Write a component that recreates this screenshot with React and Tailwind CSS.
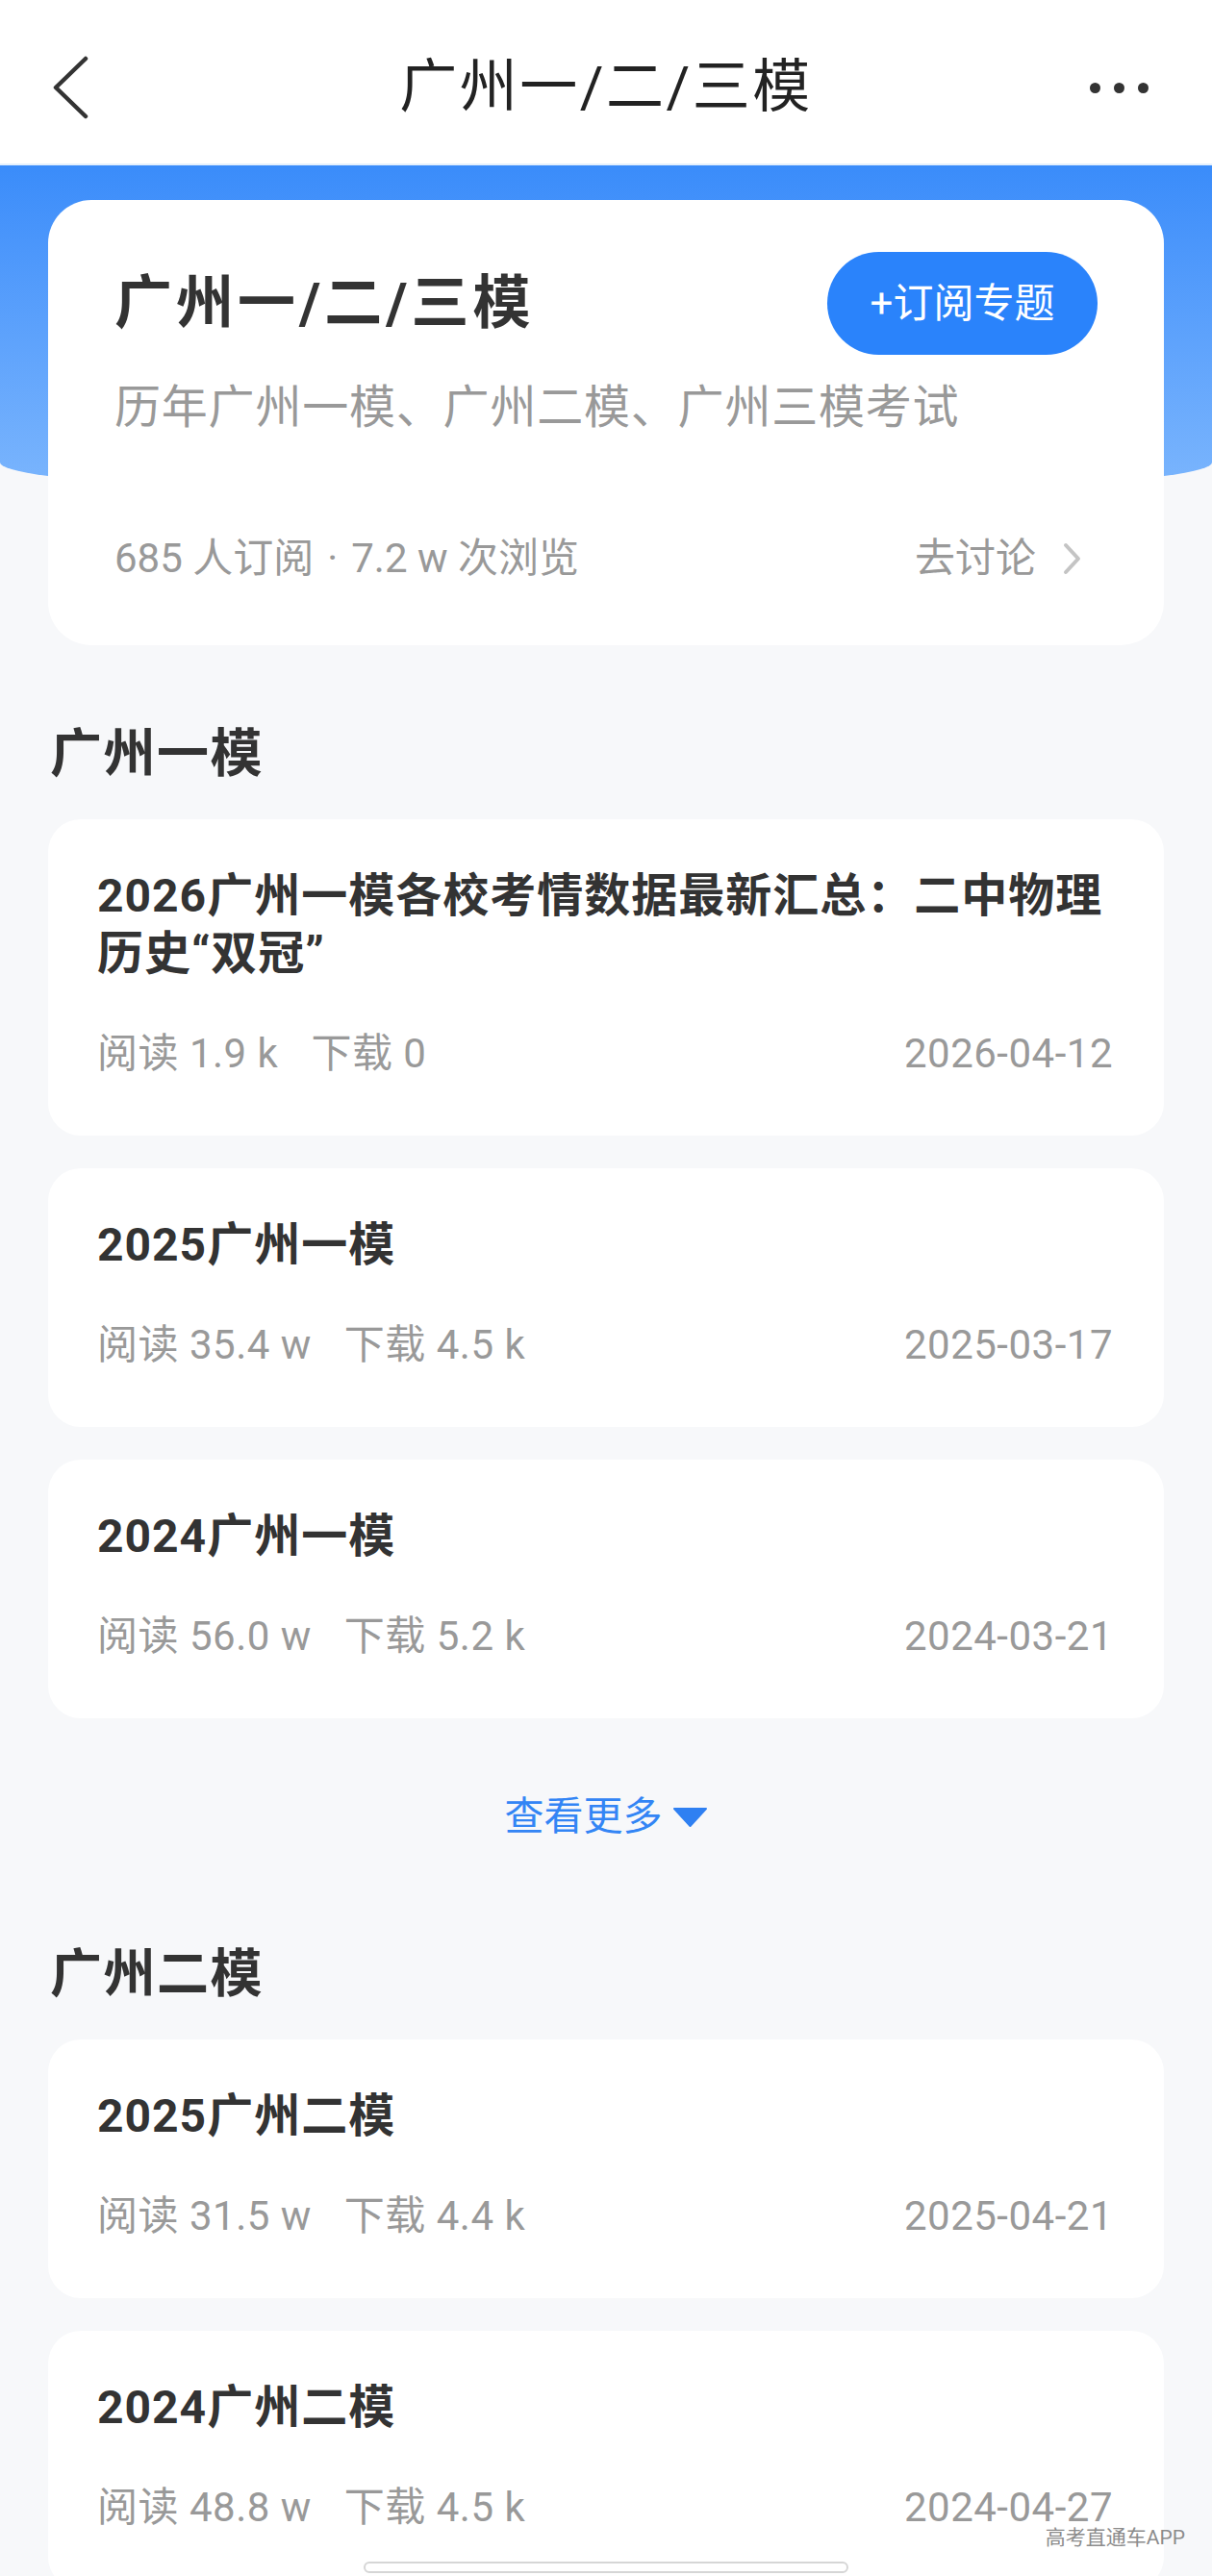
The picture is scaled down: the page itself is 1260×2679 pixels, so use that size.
import React from "react";

const groups = [
  {
    title: "广州一模",
    items: [
      { t: "2026广州一模各校考情数据最新汇总：二中物理历史“双冠”", r: "1.9 k", d: "0", date: "2026-04-12" },
      { t: "2025广州一模", r: "35.4 w", d: "4.5 k", date: "2025-03-17" },
      { t: "2024广州一模", r: "56.0 w", d: "5.2 k", date: "2024-03-21" },
    ],
    more: true,
  },
  {
    title: "广州二模",
    items: [
      { t: "2025广州二模", r: "31.5 w", d: "4.4 k", date: "2025-04-21" },
      { t: "2024广州二模", r: "48.8 w", d: "4.5 k", date: "2024-04-27" },
    ],
  },
];

function ItemCard({ it }) {
  return (
    <div className="rounded-[34px] bg-white pl-[51px] pr-[53px] pt-[50px] pb-[61px]">
      <div className="text-[48px] font-bold leading-[60px] tracking-[1px] text-[#333]">{it.t}</div>
      <div className="mt-[50px] flex items-center justify-between text-[42px] leading-[48px] tracking-[0.5px] text-[#999]">
        <div className="flex items-center gap-[34px]">
          <span>阅读 {it.r}</span>
          <span>下载 {it.d}</span>
        </div>
        <span>{it.date}</span>
      </div>
    </div>
  );
}

export default function App() {
  return (
    <div className="relative h-[2679px] w-[1260px] overflow-hidden bg-[#f7f8fa] font-['Roboto','Noto_Sans_CJK_SC',sans-serif]">
      {/* Header */}
      <header className="grid h-[172px] grid-cols-[1fr_auto_1fr] items-center border-b-2 border-[#e4f0fd] bg-white pt-[12px]">
        <div className="pl-[54px]">
          <svg width="38" height="66" viewBox="0 0 38 66" fill="none">
            <path d="M35 3 L4 33 L35 63" stroke="#333" strokeWidth="4.5" strokeLinecap="round" strokeLinejoin="round" />
          </svg>
        </div>
        <h1 className="text-[60px] font-normal leading-none tracking-[2.5px] text-[#222]">广州一/二/三模</h1>
        <div className="flex justify-end gap-[14px] pr-[66px]">
          <span className="h-[11px] w-[11px] rounded-full bg-[#333]" />
          <span className="h-[11px] w-[11px] rounded-full bg-[#333]" />
          <span className="h-[11px] w-[11px] rounded-full bg-[#333]" />
        </div>
      </header>

      {/* Blue band */}
      <div className="h-[345px] rounded-b-[50%_36px] bg-gradient-to-b from-[#3a8cfa] to-[#7cb6fd]" />

      {/* Topic card */}
      <div className="relative mx-[50px] -mt-[309px] rounded-[45px] bg-white px-[69px] pt-[54px] pb-[66px]">
        <div className="flex h-[107px] items-center justify-between">
          <h2 className="text-[60px] font-bold leading-none tracking-[4px] text-[#333]">广州一/二/三模</h2>
          <button className="flex h-[107px] w-[281px] items-center justify-center rounded-full bg-[#2a83fb] text-[42px] text-white">
            +订阅专题
          </button>
        </div>
        <p className="mt-[27px] text-[48px] leading-[56px] tracking-[0.8px] text-[#999]">历年广州一模、广州二模、广州三模考试</p>
        <div className="mt-[105px] flex items-center justify-between text-[42px] leading-[48px] text-[#999]">
          <span>
            685 人订阅<span className="mx-[14px]">·</span>7.2 w 次浏览
          </span>
          <span className="mr-[16px] flex items-center gap-[28px]">
            去讨论
            <svg width="20" height="34" viewBox="0 0 20 34" fill="none">
              <path d="M3 3 L16 17 L3 31" stroke="#c4c4c4" strokeWidth="4" strokeLinecap="round" strokeLinejoin="round" />
            </svg>
          </span>
        </div>
      </div>

      {groups.map((g, gi) => (
        <section key={gi} className={gi === 0 ? "mt-[78px]" : "mt-[105px]"}>
          <h3 className="ml-[52px] text-[54px] font-bold leading-[72px] tracking-[1.5px] text-[#333]">{g.title}</h3>
          <div className="mx-[50px] mt-[31px] flex flex-col gap-[34px]">
            {g.items.map((it, i) => (
              <ItemCard key={i} it={it} />
            ))}
          </div>
          {g.more && (
            <div className="mt-[78px] flex h-[48px] items-center justify-center text-[41px] leading-[48px] text-[#3385f5]">
              <span>查看更多</span>
              <svg className="ml-[10px]" width="37" height="21" viewBox="0 0 37 21">
                <path d="M2 2 L35 2 L18.5 20 Z" fill="#2f80f2" stroke="#2f80f2" strokeWidth="2" strokeLinejoin="round" />
              </svg>
            </div>
          )}
        </section>
      ))}

      {/* Watermark */}
      <div className="absolute right-[28px] top-[2626px] text-[21px] leading-[26px] text-[#8c8c8c] [text-shadow:0_0_2px_#fff]">
        高考直通车APP
      </div>
      {/* Home indicator */}
      <div className="absolute left-[378px] top-[2664px] h-[12px] w-[504px] rounded-full border-2 border-[#d6d6d6] bg-white" />
    </div>
  );
}
